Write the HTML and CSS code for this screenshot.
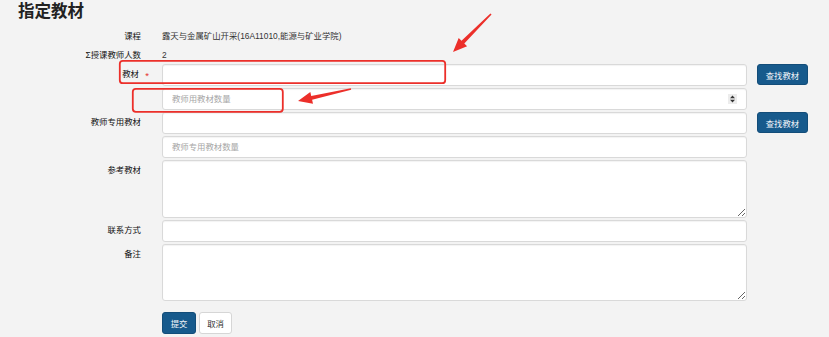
FILE: index.html
```html
<!DOCTYPE html>
<html lang="zh">
<head>
<meta charset="utf-8">
<title>指定教材</title>
<link rel="stylesheet" href="styles.css">
</head>
<body>
<div class="page">
  <h1 class="title">指定教材</h1>
  <form class="form">
    <div class="row text-row first">
      <div class="label">课程</div>
      <div class="value">露天与金属矿山开采(16A11010,能源与矿业学院)</div>
    </div>
    <div class="row text-row">
      <div class="label">Σ授课教师人数</div>
      <div class="value">2</div>
    </div>
    <div class="row">
      <div class="label req">教材<span class="star">*</span></div>
      <input class="field" type="text">
      <button type="button" class="btn btn-primary find">查找教材</button>
    </div>
    <div class="row">
      <div class="label"></div>
      <div class="num-wrap">
        <input class="field" type="text" placeholder="教师用教材数量">
        <span class="spinner"><svg width="9" height="10" viewBox="0 0 9 10"><path d="M4.5 1.5 L7 4.2 L2 4.2 Z M4.5 8.5 L7 5.8 L2 5.8 Z" fill="#333"/></svg></span>
      </div>
    </div>
    <div class="row">
      <div class="label">教师专用教材</div>
      <input class="field" type="text">
      <button type="button" class="btn btn-primary find">查找教材</button>
    </div>
    <div class="row">
      <div class="label"></div>
      <input class="field" type="text" placeholder="教师专用教材数量">
    </div>
    <div class="row">
      <div class="label">参考教材</div>
      <textarea class="field area ref"></textarea>
    </div>
    <div class="row">
      <div class="label">联系方式</div>
      <input class="field" type="text">
    </div>
    <div class="row">
      <div class="label">备注</div>
      <textarea class="field area note"></textarea>
    </div>
    <div class="row actions">
      <div class="label"></div>
      <div class="btns">
        <button type="button" class="btn btn-primary submit">提交</button>
        <button type="button" class="btn btn-default cancel">取消</button>
      </div>
    </div>
  </form>
  <svg class="annot" width="829" height="337" viewBox="0 0 829 337">
    <rect x="119.8" y="60.8" width="325.4" height="22.4" rx="3" fill="none" stroke="#ec2f2a" stroke-width="1.8"/>
    <rect x="132.8" y="88.8" width="150" height="23" rx="3" fill="none" stroke="#ec2f2a" stroke-width="1.8"/>
    <path d="M490.43,13.43 L461.5,40.7 L458.7,37.9 L453,52 L467.1,46.3 L464.3,43.5 L491.57,14.57 Z" fill="#ec2f2a"/>
    <path d="M350.82,88.22 L311.22,95.96 L310.33,92.05 L298,101 L312.99,103.77 L312.1,99.86 L351.18,89.78 Z" fill="#ec2f2a"/>
  </svg>
</div>
</body>
</html>
```
FILE: styles.css
```css
html, body {
  margin: 0;
  padding: 0;
  background: #f3f3f3;
}
body {
  font-family: "Liberation Sans", "Noto Sans CJK SC", sans-serif;
  color: #333;
  font-size: 8.4px;
}
.page {
  position: relative;
  width: 829px;
  height: 337px;
  overflow: hidden;
}
.title {
  margin: 0;
  padding-left: 18px;
  font-size: 16.5px;
  line-height: 22px;
  font-weight: 700;
  color: #222;
}
.form {
  margin-top: 5px;
}
.row {
  display: grid;
  grid-template-columns: 162px 585px 61px;
  margin-bottom: 2px;
}
.text-row {
  height: 18px;
  line-height: 18px;
  margin-bottom: 1px;
}
.text-row + .text-row {
  margin-bottom: 0;
}
.label {
  position: relative;
  text-align: right;
  padding-right: 21px;
  line-height: 21px;
  font-weight: 400;
  color: #111;
  white-space: nowrap;
}
.text-row .label {
  line-height: 18px;
}
.value {
  line-height: 18px;
  color: #333;
}
.req {
  padding-right: 23px;
}
.star {
  position: absolute;
  right: 13px;
  top: 1px;
  color: #e5322d;
  font-size: 9.5px;
  font-weight: 400;
}
.field {
  box-sizing: border-box;
  width: 585px;
  height: 22px;
  margin: 0;
  padding: 0 9px;
  background: #fff;
  border: 1px solid #d9d9d9;
  border-radius: 3px;
  box-shadow: inset 0 1px 1px rgba(0,0,0,0.05);
  font-family: inherit;
  font-size: 8.4px;
  color: #333;
  outline: none;
}
.field::placeholder {
  color: #a6a6a6;
}
.area {
  display: block;
  padding: 4px 9px;
  resize: both;
}
.ref {
  height: 58px;
}
.note {
  height: 57px;
}
.num-wrap {
  position: relative;
  height: 22px;
}
.spinner {
  position: absolute;
  right: 10px;
  top: 6px;
  width: 9px;
  height: 10px;
  background: #ececec;
  display: flex;
}
.btn {
  box-sizing: border-box;
  height: 21px;
  margin: 0;
  padding: 0;
  border-radius: 3px;
  font-family: inherit;
  font-size: 8.4px;
  cursor: pointer;
}
.btn-primary {
  background: #175a8c;
  border: 1px solid #134d79;
  color: #f4f7fa;
}
.btn-default {
  background: #fff;
  border: 1px solid #d6d6d6;
  color: #333;
}
.find {
  width: 51px;
  margin-left: 10px;
}
.actions {
  margin-top: 11px;
}
.btns {
  display: flex;
  gap: 3px;
}
.submit {
  width: 34px;
  height: 22px;
}
.cancel {
  width: 33px;
  height: 22px;
}
.annot {
  position: absolute;
  left: 0;
  top: 0;
  pointer-events: none;
}
```
